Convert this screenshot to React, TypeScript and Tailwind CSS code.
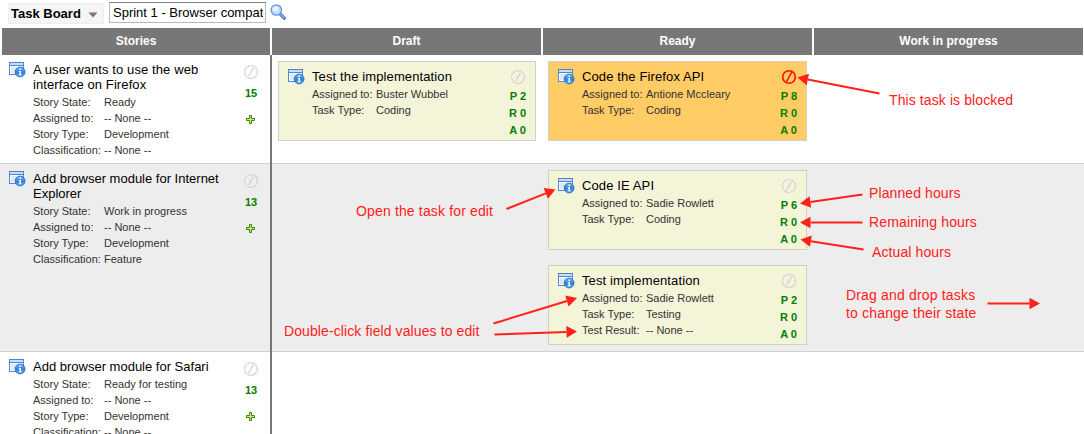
import React from "react";

type Field = [label: string, value: string];

function RecordIcon() {
  return (
    <svg width="17" height="16" viewBox="0 0 17 16" className="block shrink-0">
      <defs>
        <linearGradient id="info" x1="0" y1="0" x2="0" y2="1">
          <stop offset="0" stopColor="#86bdf0" />
          <stop offset="0.5" stopColor="#2f7fdc" />
          <stop offset="1" stopColor="#5cb0f6" />
        </linearGradient>
      </defs>
      <rect x="0.5" y="0.5" width="14" height="12" fill="#fbfdff" stroke="#4f86e0" />
      <rect x="0" y="0" width="15" height="1" fill="#5a7fb8" />
      <rect x="1" y="1" width="13" height="2" fill="#c4e2f7" />
      <rect x="0" y="3" width="15" height="1" fill="#4a88d4" />
      <rect x="2" y="5" width="6" height="6" fill="#dfe9f4" />
      <circle cx="11.1" cy="10" r="4.9" fill="url(#info)" stroke="#2a6cc0" strokeWidth="0.9" />
      <rect x="10.4" y="6.6" width="1.6" height="1.4" fill="#fff" />
      <path d="M9.7 8.9h2.3v3.5h0.8v0.8H9.7v-0.8h0.8V9.7h-0.8z" fill="#fff" />
    </svg>
  );
}

function BlockedIcon({ active = false }: { active?: boolean }) {
  return (
    <svg width="16" height="16" viewBox="0 0 16 16" className="block shrink-0">
      {active ? (
        <g fill="none" stroke="#ff0a00">
          <circle cx="8" cy="8" r="6.3" strokeWidth="1.6" />
          <path d="M10.7 3.2L5.4 12.8" strokeWidth="1.5" />
        </g>
      ) : (
        <g fill="none" stroke="#cbcbcb">
          <circle cx="8" cy="8" r="6.3" strokeWidth="1.6" strokeDasharray="1.3 0.68" />
          <circle cx="8" cy="8" r="5.2" stroke="#f8f8f8" strokeWidth="0.7" />
          <path d="M10.4 3.8L5.6 12" strokeWidth="1.4" strokeDasharray="1.6 0.5" />
        </g>
      )}
    </svg>
  );
}

function PlusIcon() {
  return (
    <svg width="10" height="10" viewBox="0 0 10 10" className="block">
      <path d="M3.5 0.5h2v3h3v2h-3v3h-2v-3h-3v-2h3z" fill="#c8ec86" stroke="#3f8500" strokeWidth="1" />
    </svg>
  );
}

function SearchIcon() {
  return (
    <svg width="17" height="17" viewBox="0 0 17 17" className="block">
      <path d="M10.4 10.2L14.3 14.2" stroke="#3465ad" strokeWidth="3.2" strokeLinecap="round" />
      <path d="M10.8 10.4L14.2 13.8" stroke="#9ab6e0" strokeWidth="1.5" strokeLinecap="round" />
      <circle cx="6.3" cy="6" r="5.2" fill="#c3ddfa" stroke="#5f98e0" strokeWidth="1.3" />
      <ellipse cx="5.4" cy="4.7" rx="2.9" ry="2.3" fill="#e7f3ff" />
    </svg>
  );
}

function Fields({ fields, labelClass }: { fields: Field[]; labelClass: string }) {
  return (
    <dl className="mt-[2px] text-[11px] leading-[16px] text-[#333333]">
      {fields.map(([label, value]) => (
        <div key={label} className="flex whitespace-nowrap">
          <dt className={labelClass}>{label}:</dt>
          <dd>{value}</dd>
        </div>
      ))}
    </dl>
  );
}

interface StoryProps {
  title: string;
  points: number;
  fields: Field[];
  titleClass?: string;
}

function Story({ title, points, fields, titleClass = "" }: StoryProps) {
  return (
    <div className="flex w-[270px] shrink-0 pl-[9px] pt-[7px]">
      <div className="w-6 shrink-0">
        <RecordIcon />
      </div>
      <div className="w-[200px] shrink-0">
        <h3 className={"w-[194px] text-[13px] leading-[15px] text-black " + titleClass}>{title}</h3>
        <Fields fields={fields} labelClass="w-[71px]" />
      </div>
      <div className="flex w-[36px] flex-col items-center pt-[2px]">
        <BlockedIcon />
        <span className="mt-[6px] text-[11px] leading-[14px] font-bold text-[#008000]">{points}</span>
        <div className="mt-[15px]">
          <PlusIcon />
        </div>
      </div>
    </div>
  );
}

interface TaskProps {
  title: string;
  planned: number;
  fields: Field[];
  blocked?: boolean;
}

function Task({ title, planned, fields, blocked = false }: TaskProps) {
  return (
    <article
      className={
        "flex h-[80px] border border-[#d0d0c8] pl-[9px] pt-[7px] " + (blocked ? "bg-[#ffcc66]" : "bg-[#f4f4d9]")
      }
    >
      <div className="w-6 shrink-0">
        <RecordIcon />
      </div>
      <div className="flex-1">
        <h3 className="text-[13px] leading-[15px] tracking-[0.12px] whitespace-nowrap text-black">{title}</h3>
        <Fields fields={fields} labelClass="w-[64px]" />
      </div>
      <div className="flex w-[34px] shrink-0 flex-col items-end pr-[9px]">
        <BlockedIcon active={blocked} />
        <div className="mt-[3px] text-right text-[11px] leading-[17px] font-bold whitespace-nowrap text-[#008000]">
          <div>P {planned}</div>
          <div>R 0</div>
          <div>A 0</div>
        </div>
      </div>
    </article>
  );
}

function Row({ className, story, children }: { className: string; story: React.ReactNode; children?: React.ReactNode }) {
  return (
    <section className={"flex border-b border-[#cfcfcf] " + className}>
      {story}
      <div className="-mb-px w-[2px] shrink-0 bg-[#777777]" />
      {children}
    </section>
  );
}

const arrows: [number, number, number, number][] = [
  [879.5, 93.5, 797.5, 77.5],
  [862.5, 194.5, 800, 203.5],
  [862.5, 222.5, 800, 222.5],
  [863.5, 249.5, 800.5, 239.5],
  [987.5, 303.5, 1040, 303.5],
  [506.5, 209, 555.5, 189.5],
  [493.5, 323.5, 577, 298],
  [494.5, 334.5, 577, 331.5],
];

function Arrow({ from, to }: { from: [number, number]; to: [number, number] }) {
  const dx = to[0] - from[0];
  const dy = to[1] - from[1];
  const len = Math.hypot(dx, dy);
  const ux = dx / len;
  const uy = dy / len;
  const bx = to[0] - ux * 10.5;
  const by = to[1] - uy * 10.5;
  return (
    <g>
      <line x1={from[0]} y1={from[1]} x2={bx} y2={by} stroke="#ff2018" strokeWidth="2" />
      <polygon
        points={`${to[0]},${to[1]} ${bx - uy * 5.8},${by + ux * 5.8} ${bx + uy * 5.8},${by - ux * 5.8}`}
        fill="#ff2018"
      />
    </g>
  );
}

function Note({ className, children }: { className: string; children: React.ReactNode }) {
  return (
    <p className={"absolute text-[14px] leading-[18px] whitespace-nowrap text-[#ff2018] " + className}>{children}</p>
  );
}

export default function App() {
  return (
    <main className="relative h-[434px] w-[1084px] overflow-hidden bg-white font-['Liberation_Sans',Arial,sans-serif]">
      <header className="flex h-[28px] items-start pl-[8px] pt-[2px]">
        <button className="mt-px flex h-[21px] w-[96px] items-center border border-[#ededed] bg-[#f5f5f5] pl-[2px] text-[13px] font-bold text-black">
          <span>Task Board</span>
          <svg width="10" height="6" viewBox="0 0 10 6" className="ml-[7px] mt-[2px]">
            <path d="M0.5 0.5h9L5 5.5z" fill="#777" />
          </svg>
        </button>
        <input
          className="ml-[5px] h-[21px] w-[157px] border border-[#b8b8b8] border-t-[#808080] bg-white pr-[2px] pl-[3px] text-[13px] text-black outline-none"
          defaultValue="Sprint 1 - Browser compatibility"
        />
        <div className="ml-[4px] mt-[2px]">
          <SearchIcon />
        </div>
      </header>

      <div className="grid h-[27px] grid-cols-[268px_269px_269px_269px] gap-[2px] pl-[2px] text-center text-[12px] leading-[27px] font-bold text-white">
        <div className="bg-[#777777]">Stories</div>
        <div className="bg-[#777777]">Draft</div>
        <div className="bg-[#777777]">Ready</div>
        <div className="bg-[#777777]">Work in progress</div>
      </div>

      <Row
        className="h-[109px] bg-white"
        story={
          <Story
            title="A user wants to use the web interface on Firefox"
            titleClass="tracking-[0.1px]"
            points={15}
            fields={[
              ["Story State", "Ready"],
              ["Assigned to", "-- None --"],
              ["Story Type", "Development"],
              ["Classification", "-- None --"],
            ]}
          />
        }
      >
        <div className="w-[270px] px-[6px] pt-[6px]">
          <Task
            title="Test the implementation"
            planned={2}
            fields={[
              ["Assigned to", "Buster Wubbel"],
              ["Task Type", "Coding"],
            ]}
          />
        </div>
        <div className="w-[271px] px-[6px] pt-[6px]">
          <Task
            blocked
            title="Code the Firefox API"
            planned={8}
            fields={[
              ["Assigned to", "Antione Mccleary"],
              ["Task Type", "Coding"],
            ]}
          />
        </div>
      </Row>

      <Row
        className="h-[188px] bg-[#ededed]"
        story={
          <Story
            title="Add browser module for Internet Explorer"
            points={13}
            fields={[
              ["Story State", "Work in progress"],
              ["Assigned to", "-- None --"],
              ["Story Type", "Development"],
              ["Classification", "Feature"],
            ]}
          />
        }
      >
        <div className="w-[270px]" />
        <div className="flex w-[271px] flex-col gap-[15px] px-[6px] pt-[6px]">
          <Task
            title="Code IE API"
            planned={6}
            fields={[
              ["Assigned to", "Sadie Rowlett"],
              ["Task Type", "Coding"],
            ]}
          />
          <Task
            title="Test implementation"
            planned={2}
            fields={[
              ["Assigned to", "Sadie Rowlett"],
              ["Task Type", "Testing"],
              ["Test Result", "-- None --"],
            ]}
          />
        </div>
      </Row>

      <Row
        className="h-[109px] bg-white"
        story={
          <Story
            title="Add browser module for Safari"
            points={13}
            fields={[
              ["Story State", "Ready for testing"],
              ["Assigned to", "-- None --"],
              ["Story Type", "Development"],
              ["Classification", "-- None --"],
            ]}
          />
        }
      />

      <svg className="pointer-events-none absolute top-0 left-0" width="1084" height="434" viewBox="0 0 1084 434">
        {arrows.map(([x1, y1, x2, y2]) => (
          <Arrow key={`${x1}-${y1}`} from={[x1, y1]} to={[x2, y2]} />
        ))}
      </svg>
      <Note className="top-[91px] left-[889px] tracking-[0.1px]">This task is blocked</Note>
      <Note className="top-[184px] left-[869px] tracking-[0.1px]">Planned hours</Note>
      <Note className="top-[213px] left-[869px] tracking-[0.14px]">Remaining hours</Note>
      <Note className="top-[243px] left-[872px] tracking-[0.1px]">Actual hours</Note>
      <Note className="top-[286px] left-[846px] tracking-[0.17px]">
        Drag and drop tasks
        <br />
        to change their state
      </Note>
      <Note className="top-[202px] left-[356px] tracking-[0.15px]">Open the task for edit</Note>
      <Note className="top-[322px] left-[284px] tracking-[0.1px]">Double-click field values to edit</Note>
    </main>
  );
}
